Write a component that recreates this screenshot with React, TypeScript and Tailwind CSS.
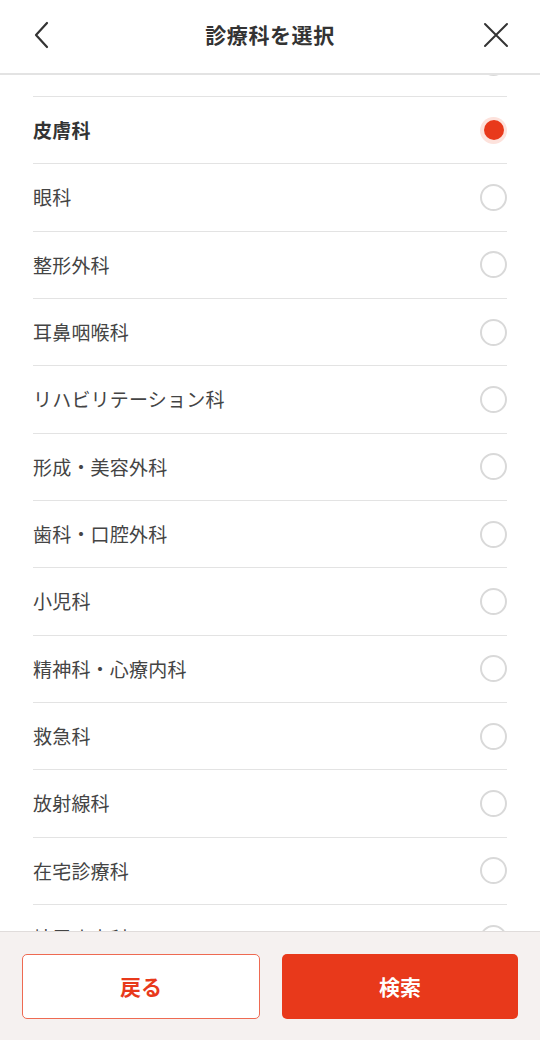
const departments = [
  '泌尿器科',
  '皮膚科',
  '眼科',
  '整形外科',
  '耳鼻咽喉科',
  'リハビリテーション科',
  '形成・美容外科',
  '歯科・口腔外科',
  '小児科',
  '精神科・心療内科',
  '救急科',
  '放射線科',
  '在宅診療科',
  '糖尿病内科',
];

const selected = '皮膚科';

const Radio = ({ checked }: { checked: boolean }) =>
  checked ? (
    <span className="flex h-[27px] w-[27px] items-center justify-center rounded-full bg-[#fde2dc]">
      <span className="h-[20px] w-[20px] rounded-full bg-[#e8391b]" />
    </span>
  ) : (
    <span className="h-[27px] w-[27px] rounded-full border-2 border-[#d9d9d9] bg-white" />
  );

export default function App() {
  return (
    <div
      className="flex h-[1040px] w-[540px] flex-col overflow-hidden bg-white text-[#333]"
      style={{ fontFamily: '"Noto Sans CJK JP", "Noto Sans", sans-serif' }}
    >
      <header className="relative z-10 flex h-[75px] shrink-0 items-center justify-between border-b-2 border-[#e3e3e3] bg-white px-[26px] pb-[4px]">
        <button className="flex h-[36px] w-[36px] items-center justify-center">
          <svg width="36" height="36" viewBox="0 0 36 36" fill="none" stroke="#333" strokeWidth="2.2" strokeLinecap="round" strokeLinejoin="round">
            <path d="M21 6 L10 18 L21 30" />
          </svg>
        </button>
        <h1 className="text-[21px] font-bold tracking-[0.6px] text-[#333]">診療科を選択</h1>
        <button className="flex h-[36px] w-[36px] items-center justify-center">
          <svg width="36" height="36" viewBox="0 0 36 36" fill="none" stroke="#333" strokeWidth="2" strokeLinecap="round">
            <path d="M7 7 L29 29 M29 7 L7 29" />
          </svg>
        </button>
      </header>

      <main className="flex-1 overflow-hidden">
        <ul className="mx-[33px] mt-[-45.33px]">
          {departments.map((name) => {
            const checked = name === selected;
            return (
              <li
                key={name}
                className="flex h-[67.33px] items-center justify-between border-b border-[#e3e3e3]"
              >
                <span
                  className={
                    checked
                      ? 'text-[19px] font-bold tracking-[0.2px] text-[#333]'
                      : 'text-[19px] tracking-[0.2px] text-[#444]'
                  }
                >
                  {name}
                </span>
                <Radio checked={checked} />
              </li>
            );
          })}
        </ul>
      </main>

      <footer className="flex h-[109px] shrink-0 gap-[22px] border-t border-[#e0dcdb] bg-[#f5f1f0] px-[22px] pt-[22px]">
        <button className="flex h-[65px] flex-1 items-center justify-center rounded-[5px] border-[1.5px] border-[#ee6a52] bg-white text-[21px] font-bold text-[#e8391b]">
          戻る
        </button>
        <button className="flex h-[65px] flex-1 items-center justify-center rounded-[5px] bg-[#e8391b] text-[21px] font-bold text-white">
          検索
        </button>
      </footer>
    </div>
  );
}
